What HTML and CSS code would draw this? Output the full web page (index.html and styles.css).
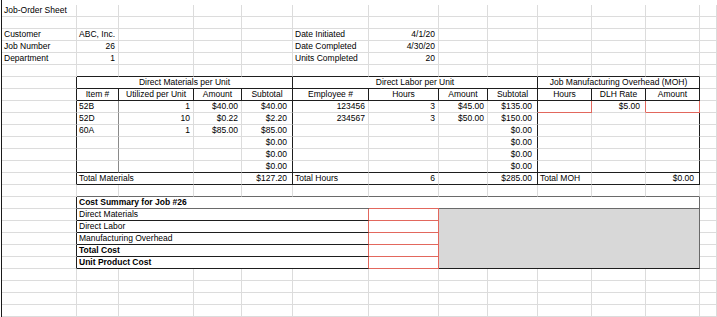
FILE: index.html
```html
<!DOCTYPE html>
<html lang="en">
<head>
<meta charset="utf-8">
<title>Job-Order Sheet</title>
<link rel="stylesheet" href="styles.css">
</head>
<body>
<div class="sheet">
  <!-- row 1 -->
  <div class="c">Job-Order Sheet</div><div class="c"></div><div class="c"></div><div class="c"></div><div class="c"></div><div class="c"></div><div class="c"></div><div class="c"></div><div class="c"></div><div class="c"></div><div class="c"></div><div class="c"></div><div class="c"></div>
  <!-- row 2 -->
  <div class="c"></div><div class="c"></div><div class="c"></div><div class="c"></div><div class="c"></div><div class="c"></div><div class="c"></div><div class="c"></div><div class="c"></div><div class="c"></div><div class="c"></div><div class="c"></div><div class="c"></div>
  <!-- row 3 -->
  <div class="c">Customer</div><div class="c R">ABC, Inc.</div><div class="c"></div><div class="c"></div><div class="c"></div><div class="c">Date Initiated</div><div class="c R">4/1/20</div><div class="c"></div><div class="c"></div><div class="c"></div><div class="c"></div><div class="c"></div><div class="c"></div>
  <!-- row 4 -->
  <div class="c">Job Number</div><div class="c R">26</div><div class="c"></div><div class="c"></div><div class="c"></div><div class="c">Date Completed</div><div class="c R">4/30/20</div><div class="c"></div><div class="c"></div><div class="c"></div><div class="c"></div><div class="c"></div><div class="c"></div>
  <!-- row 5 -->
  <div class="c">Department</div><div class="c R">1</div><div class="c"></div><div class="c"></div><div class="c"></div><div class="c">Units Completed</div><div class="c R">20</div><div class="c"></div><div class="c"></div><div class="c"></div><div class="c"></div><div class="c"></div><div class="c"></div>
  <!-- row 6 -->
  <div class="c"></div><div class="c db"></div><div class="c db"></div><div class="c db"></div><div class="c db"></div><div class="c db"></div><div class="c db"></div><div class="c db"></div><div class="c db"></div><div class="c db"></div><div class="c db"></div><div class="c db"></div><div class="c"></div>
  <!-- row 7 -->
  <div class="c dr"></div><div class="c C dr db s4">Direct Materials per Unit</div><div class="c C dr db s4">Direct Labor per Unit</div><div class="c C dr db s3">Job Manufacturing Overhead (MOH)</div><div class="c"></div>
  <!-- row 8 -->
  <div class="c dr"></div><div class="c C dr db">Item #</div><div class="c C dr db">Utilized per Unit</div><div class="c C dr db">Amount</div><div class="c C dr db">Subtotal</div><div class="c C dr db">Employee #</div><div class="c C dr db">Hours</div><div class="c C dr db">Amount</div><div class="c C dr db">Subtotal</div><div class="c C dr db">Hours</div><div class="c C dr db">DLH Rate</div><div class="c C dr db">Amount</div><div class="c"></div>
  <!-- row 9 -->
  <div class="c dr"></div><div class="c mr">52B</div><div class="c R">1</div><div class="c R">$40.00</div><div class="c R m dr">$40.00</div><div class="c R">123456</div><div class="c R">3</div><div class="c R">$45.00</div><div class="c R m dr">$135.00</div><div class="c rr rb"></div><div class="c R m rr">$5.00</div><div class="c rr rb"></div><div class="c"></div>
  <!-- row 10 -->
  <div class="c dr"></div><div class="c mr">52D</div><div class="c R">10</div><div class="c R">$0.22</div><div class="c R m dr">$2.20</div><div class="c R">234567</div><div class="c R">3</div><div class="c R">$50.00</div><div class="c R m dr">$150.00</div><div class="c"></div><div class="c"></div><div class="c dr"></div><div class="c"></div>
  <!-- row 11 -->
  <div class="c dr"></div><div class="c mr">60A</div><div class="c R">1</div><div class="c R">$85.00</div><div class="c R m dr">$85.00</div><div class="c"></div><div class="c"></div><div class="c"></div><div class="c R m dr">$0.00</div><div class="c"></div><div class="c"></div><div class="c dr"></div><div class="c"></div>
  <!-- row 12 -->
  <div class="c dr"></div><div class="c mr"></div><div class="c"></div><div class="c"></div><div class="c R m dr">$0.00</div><div class="c"></div><div class="c"></div><div class="c"></div><div class="c R m dr">$0.00</div><div class="c"></div><div class="c"></div><div class="c dr"></div><div class="c"></div>
  <!-- row 13 -->
  <div class="c dr"></div><div class="c mr"></div><div class="c"></div><div class="c"></div><div class="c R m dr">$0.00</div><div class="c"></div><div class="c"></div><div class="c"></div><div class="c R m dr">$0.00</div><div class="c"></div><div class="c"></div><div class="c dr"></div><div class="c"></div>
  <!-- row 14 -->
  <div class="c dr"></div><div class="c mr db"></div><div class="c db"></div><div class="c db"></div><div class="c R m dr db">$0.00</div><div class="c db"></div><div class="c db"></div><div class="c db"></div><div class="c R m dr db">$0.00</div><div class="c db"></div><div class="c db"></div><div class="c dr db"></div><div class="c"></div>
  <!-- row 15 -->
  <div class="c dr"></div><div class="c db s2">Total Materials</div><div class="c db"></div><div class="c R m dr db">$127.20</div><div class="c db">Total Hours</div><div class="c R db">6</div><div class="c db"></div><div class="c R m dr db">$285.00</div><div class="c db">Total MOH</div><div class="c db"></div><div class="c R m dr db">$0.00</div><div class="c"></div>
  <!-- row 16 -->
  <div class="c"></div><div class="c gb"></div><div class="c gb"></div><div class="c gb"></div><div class="c gb"></div><div class="c gb"></div><div class="c gb"></div><div class="c gb"></div><div class="c gb"></div><div class="c gb"></div><div class="c gb"></div><div class="c gb"></div><div class="c"></div>
  <!-- row 17 -->
  <div class="c dr"></div><div class="c b gr gb s11">Cost Summary for Job #26</div><div class="c"></div>
  <!-- row 18 -->
  <div class="c dr"></div><div class="c s5 rr db">Direct Materials</div><div class="c rr rb rt"></div><div class="c shade"></div><div class="c"></div>
  <!-- row 19 -->
  <div class="c dr"></div><div class="c s5 rr db">Direct Labor</div><div class="c rr rb"></div><div class="c"></div>
  <!-- row 20 -->
  <div class="c dr"></div><div class="c s5 rr db">Manufacturing Overhead</div><div class="c rr rb"></div><div class="c"></div>
  <!-- row 21 -->
  <div class="c dr"></div><div class="c s5 rr db b">Total Cost</div><div class="c rr rb"></div><div class="c"></div>
  <!-- row 22 -->
  <div class="c dr"></div><div class="c s5 rr db b">Unit Product Cost</div><div class="c rr rb"></div><div class="c"></div>
  <!-- rows 23-26 -->
  <div class="c"></div><div class="c"></div><div class="c"></div><div class="c"></div><div class="c"></div><div class="c"></div><div class="c"></div><div class="c"></div><div class="c"></div><div class="c"></div><div class="c"></div><div class="c"></div><div class="c"></div>
  <div class="c"></div><div class="c"></div><div class="c"></div><div class="c"></div><div class="c"></div><div class="c"></div><div class="c"></div><div class="c"></div><div class="c"></div><div class="c"></div><div class="c"></div><div class="c"></div><div class="c"></div>
  <div class="c"></div><div class="c"></div><div class="c"></div><div class="c"></div><div class="c"></div><div class="c"></div><div class="c"></div><div class="c"></div><div class="c"></div><div class="c"></div><div class="c"></div><div class="c"></div><div class="c"></div>
  <div class="c"></div><div class="c"></div><div class="c"></div><div class="c"></div><div class="c"></div><div class="c"></div><div class="c"></div><div class="c"></div><div class="c"></div><div class="c"></div><div class="c"></div><div class="c"></div><div class="c"></div>
</div>
</body>
</html>
```
FILE: styles.css
```css
html, body {
  margin: 0;
  padding: 0;
  background: #ffffff;
}

.sheet {
  display: grid;
  grid-template-columns: 75px 42px 75px 48px 51px 76px 70px 49px 50px 54px 54px 54px 1fr;
  grid-auto-rows: 12px;
  margin-left: 1px;
  border-left: 1px solid #1a1a1a;
  padding-top: 5px;
  height: 317px;
  box-sizing: border-box;
  overflow: hidden;
  font-family: "Liberation Sans", Arial, sans-serif;
  font-size: 8.5px;
  line-height: 11px;
  color: #000000;
}

.c {
  border-right: 1px solid #dcdcdc;
  border-bottom: 1px solid #dcdcdc;
  padding: 0 2px;
  white-space: nowrap;
  overflow: visible;
  min-width: 0;
}

.R { text-align: right; padding-right: 3px; }
.m { padding-right: 5px; }
.C { text-align: center; padding: 0; }
.b { font-weight: bold; }

.dr { border-right-color: #1e1e1e; }
.db { border-bottom-color: #1e1e1e; }
.mr { border-right-color: #8a8a8a; }
.gr { border-right-color: #6a6a6a; }
.gb { border-bottom-color: #6a6a6a; }
.rr { border-right-color: #e2675d; }
.rb { border-bottom-color: #e2675d; }
.rt { box-shadow: 0 -1px 0 #e2675d; }

.s2 { grid-column: span 2; }
.s3 { grid-column: span 3; }
.s4 { grid-column: span 4; }
.s5 { grid-column: span 5; }
.s11 { grid-column: span 11; }

.shade {
  grid-column: span 5;
  grid-row: span 5;
  background: #d8d8d8;
  border-right-color: #6a6a6a;
  border-bottom-color: #1e1e1e;
}
```
